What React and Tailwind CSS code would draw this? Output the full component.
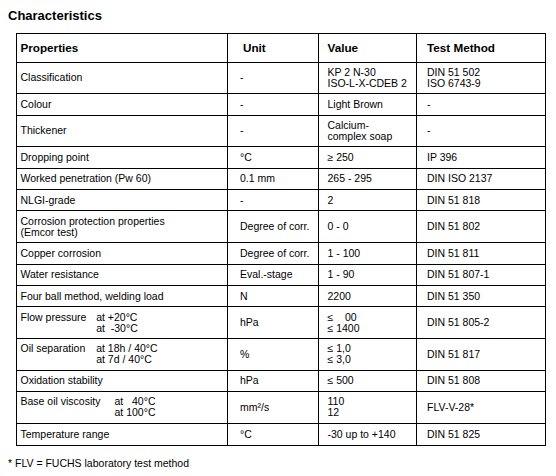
import React from "react";

const rows = [
  { d: true, p: "Classification", u: "-", v: ["KP 2 N-30", "ISO-L-X-CDEB 2"], t: ["DIN 51 502", "ISO 6743-9"] },
  { p: "Colour", u: "-", v: ["Light Brown"], t: ["-"] },
  { d: true, p: "Thickener", u: "-", v: ["Calcium-", "complex soap"], t: ["-"] },
  { p: "Dropping point", u: "°C", v: ["≥ 250"], t: ["IP 396"] },
  { p: "Worked penetration (Pw 60)", u: "0.1 mm", v: ["265 - 295"], t: ["DIN ISO 2137"] },
  { p: "NLGI-grade", u: "-", v: ["2"], t: ["DIN 51 818"] },
  { d: true, p: ["Corrosion protection properties", "(Emcor test)"], u: "Degree of corr.", v: ["0 - 0"], t: ["DIN 51 802"] },
  { p: "Copper corrosion", u: "Degree of corr.", v: ["1 - 100"], t: ["DIN 51 811"] },
  { p: "Water resistance", u: "Eval.-stage", v: ["1 - 90"], t: ["DIN 51 807-1"] },
  { p: "Four ball method, welding load", u: "N", v: ["2200"], t: ["DIN 51 350"] },
  { d: true, p: { label: "Flow pressure", w: "a", lines: ["at +20°C", "at  -30°C"] }, u: "hPa", v: ["≤    00", "≤ 1400"], t: ["DIN 51 805-2"] },
  { d: true, p: { label: "Oil separation", w: "a", lines: ["at 18h / 40°C", "at 7d / 40°C"] }, u: "%", v: ["≤ 1,0", "≤ 3,0"], t: ["DIN 51 817"] },
  { p: "Oxidation stability", u: "hPa", v: ["≤ 500"], t: ["DIN 51 808"] },
  { d: true, p: { label: "Base oil viscosity", w: "b", lines: ["at   40°C", "at 100°C"] }, u: "mm²/s", v: ["110", "12"], t: ["FLV-V-28*"] },
  { p: "Temperature range", u: "°C", v: ["-30 up to +140"], t: ["DIN 51 825"] },
];

function Prop({ p }) {
  if (typeof p === "string") return <span>{p}</span>;
  if (Array.isArray(p))
    return (
      <div className="flex flex-col">
        {p.map((l, i) => (
          <span key={i}>{l}</span>
        ))}
      </div>
    );
  return (
    <div className="flex">
      <span className={p.w === "a" ? "w-[75.7px] shrink-0" : "w-[94px] shrink-0"}>{p.label}</span>
      <div className="flex flex-col whitespace-pre">
        {p.lines.map((l, i) => (
          <span key={i}>{l}</span>
        ))}
      </div>
    </div>
  );
}

function Lines({ items }) {
  return (
    <div className="flex flex-col whitespace-pre">
      {items.map((l, i) => (
        <span key={i}>{l}</span>
      ))}
    </div>
  );
}

export default function App() {
  return (
    <div
      className="w-[556px] h-[476px] bg-white text-black"
      style={{ fontFamily: '"Liberation Sans", Arial, sans-serif' }}
    >
      <div className="pt-[7.5px] pl-[8px] text-[13px] leading-[15px] font-bold">Characteristics</div>
      <div className="mt-[10.5px] ml-[16px] w-[530px] border border-black text-[10.5px] leading-[11px]">
        <div className="flex h-[28.5px] border-b border-black font-bold text-[11.7px]">
          <div className="w-[211px] border-r border-black flex items-center pl-[3.5px]">Properties</div>
          <div className="w-[91px] border-r border-black flex items-center pl-[15px]">Unit</div>
          <div className="w-[98px] border-r border-black flex items-center pl-[8.5px]">Value</div>
          <div className="flex-1 flex items-center pl-[10px]">Test Method</div>
        </div>
        {rows.map((r, i) => (
          <div
            key={i}
            className={
              (r.d ? "h-[31.7px]" : "h-[21.4px]") +
              (i === rows.length - 1 ? " flex" : " flex border-b border-black")
            }
          >
            <div className="w-[211px] border-r border-black flex items-center pl-[3.5px]">
              <Prop p={r.p} />
            </div>
            <div className="w-[91px] border-r border-black flex items-center pl-[12px]">{r.u}</div>
            <div className="w-[98px] border-r border-black flex items-center pl-[8.5px]">
              <Lines items={r.v} />
            </div>
            <div className="flex-1 flex items-center pl-[10px]">
              <Lines items={r.t} />
            </div>
          </div>
        ))}
      </div>
      <div className="mt-[11px] pl-[8px] text-[10.5px] leading-[12px]">* FLV = FUCHS laboratory test method</div>
    </div>
  );
}
